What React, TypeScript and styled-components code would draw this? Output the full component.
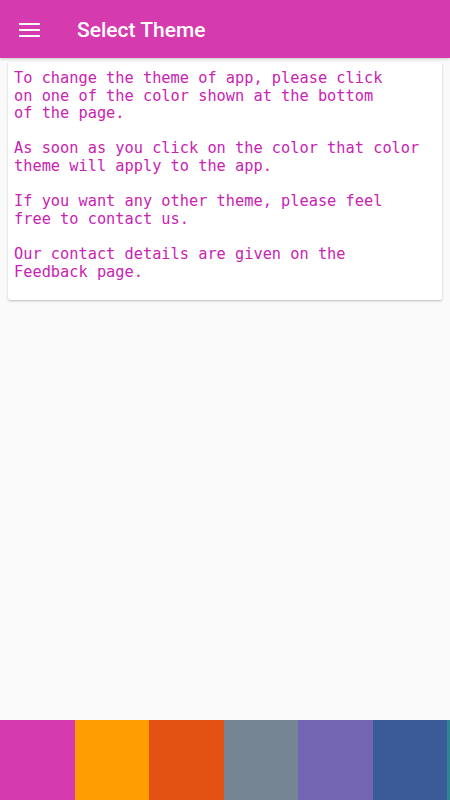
import React from "react";
import styled, { createGlobalStyle } from "styled-components";

const Global = createGlobalStyle`
  html, body { margin: 0; padding: 0; background: #fafafa; }
  #root { height: 800px; }
`;

const Page = styled.div`
  display: flex;
  flex-direction: column;
  height: 800px;
  width: 450px;
  background: #fafafa;
  overflow: hidden;
`;

const Toolbar = styled.header`
  box-sizing: border-box;
  display: flex;
  align-items: center;
  height: 58px;
  flex-shrink: 0;
  background: #d63aaf;
  box-shadow: 0 1px 3px rgba(0, 0, 0, 0.2);
  padding: 2px 0 0 19px;
  gap: 37px;
`;

const MenuButton = styled.div`
  display: flex;
  flex-direction: column;
  justify-content: space-between;
  width: 21px;
  height: 14px;
  & > span {
    display: block;
    height: 2px;
    background: #fff;
  }
`;

const Title = styled.h1`
  margin: 0;
  color: #fff;
  font-family: Roboto, "Noto Sans", sans-serif;
  font-weight: 500;
  font-size: 21px;
  letter-spacing: 0;
`;

const Card = styled.div`
  margin: 4px 8px 0;
  background: #fff;
  border-radius: 2px;
  box-shadow: 0 1px 3px rgba(0, 0, 0, 0.18), 0 1px 1px rgba(0, 0, 0, 0.08);
  padding: 8px 6px 19px;
`;

const Info = styled.pre`
  margin: 0;
  font-family: "DejaVu Sans Mono", monospace;
  font-size: 15.3px;
  line-height: 17.6px;
  color: #c824b2;
  white-space: pre-wrap;
`;

const Spacer = styled.div`
  flex: 1;
`;

const Swatches = styled.div`
  display: flex;
  height: 80px;
  flex-shrink: 0;
  overflow: hidden;
`;

const Swatch = styled.div<{ $color: string }>`
  flex: 0 0 74.5px;
  height: 100%;
  background: ${(p) => p.$color};
`;

const text = `To change the theme of app, please click
on one of the color shown at the bottom
of the page.

As soon as you click on the color that color
theme will apply to the app.

If you want any other theme, please feel
free to contact us.

Our contact details are given on the
Feedback page.`;

const colors = ["#d63aaf", "#ff9c00", "#e35212", "#768593", "#7465b3", "#3a5a98", "#2e8490"];

export default function App() {
  return (
    <>
      <Global />
      <Page>
        <Toolbar>
          <MenuButton>
            <span />
            <span />
            <span />
          </MenuButton>
          <Title>Select Theme</Title>
        </Toolbar>
        <Card>
          <Info>{text}</Info>
        </Card>
        <Spacer />
        <Swatches>
          {colors.map((c) => (
            <Swatch key={c} $color={c} />
          ))}
        </Swatches>
      </Page>
    </>
  );
}
